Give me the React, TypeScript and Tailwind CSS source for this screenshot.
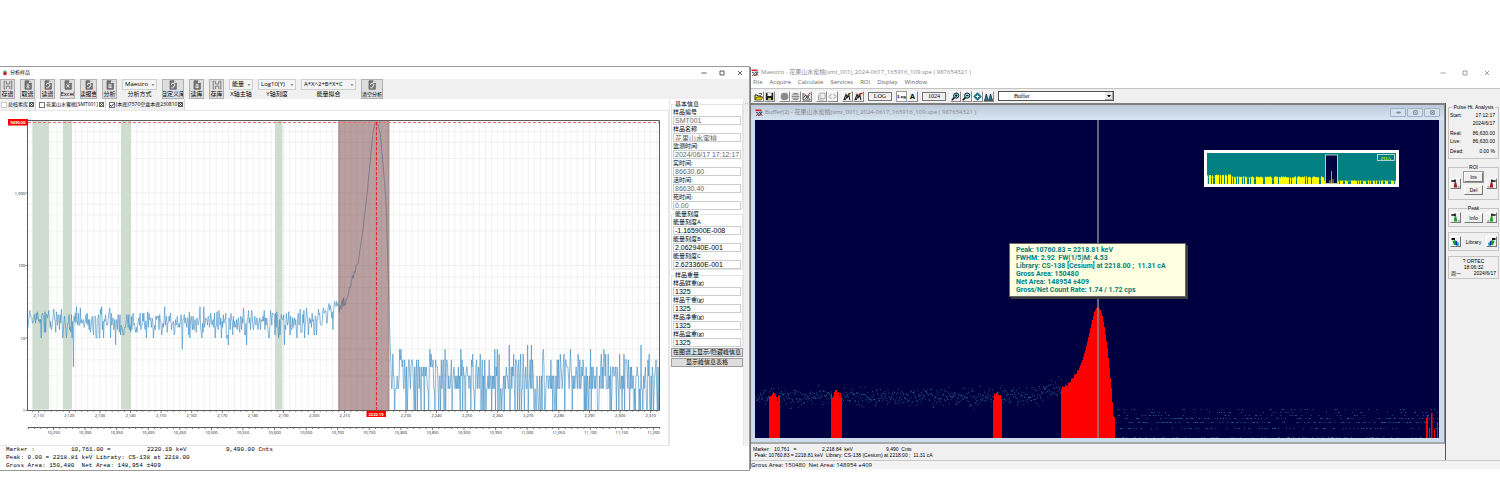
import { ReactNode } from "react";

type Point = [number, number];

const makeRandom = (seed: number) => {
    let s = seed;
    return () => {
        s = (s * 1664525 + 1013904223) % 4294967296;
        return s / 4294967296;
    };
};

const poisson = (mean: number, rnd: () => number) => {
    const limit = Math.exp(-mean);
    let k = 0;
    let p = rnd();
    while (p > limit) {
        k++;
        p *= rnd();
    }
    return k;
};

const interpolate = (points: Point[], x: number) => {
    for (let i = 1; i < points.length; i++) {
        const [x0, y0] = points[i - 1];
        const [x1, y1] = points[i];
        if (x <= x1) return y0 + ((x - x0) / (x1 - x0)) * (y1 - y0);
    }
    return points[points.length - 1][1];
};

// log scale of the left chart: one decade is 72.5 units high
const logY = (v: number) => 410.5 - Math.log10(Math.max(v, 1)) * 72.5;

const DIPS: Record<number, number> = { 73: 4, 99: 10, 115: 8, 182: 7, 228: 8, 246: 8, 284: 8, 304: 10 };

const PEAK: Point[] = [
    [339, 308],
    [343, 302],
    [346, 303],
    [350, 287],
    [353, 276],
    [358, 262],
    [362, 237],
    [366, 204],
    [370, 164],
    [373, 132],
    [375, 123],
    [377, 122],
    [380, 132],
    [383, 163],
    [386, 202],
    [388, 265],
    [389, 300],
    [390, 340],
    [391, 366],
];

const buildSpectrum = () => {
    const rnd = makeRandom(77);
    const pts: string[] = [];
    let lastDip = 0;
    for (let x = 28; x < 659.5; x += 0.63) {
        let y: number;
        if (x < 338) {
            const mean = x > 322 ? 18 + (x - 322) * 0.8 : 17;
            let v = Math.min(Math.max(poisson(mean, rnd), 10), x > 322 ? 32 : 27);
            const key = Math.floor(x);
            if (DIPS[key] && lastDip !== key) {
                v = DIPS[key];
                lastDip = key;
            }
            y = logY(v);
        } else if (x < 391) {
            const noise = x < 347 ? 10 : x < 359 ? 5 : 0;
            y = interpolate(PEAK, x) + (rnd() - 0.5) * noise;
        } else {
            y = logY(Math.min(poisson(3, rnd), 8));
        }
        pts.push(`${x.toFixed(1)},${y.toFixed(1)}`);
    }
    return pts.join(" ");
};

const SPECTRUM = buildSpectrum();

const kevX = (v: number) => 38.7 + (v - 2110) * 3.06;
const chanX = (v: number) => 53.5 + (v - 10250) * 0.6315;
const range = (from: number, to: number, step: number) => {
    const out: number[] = [];
    for (let v = from; v <= to; v += step) out.push(v);
    return out;
};

const GREEN_BANDS = [
    [32.5, 16.5],
    [63, 9],
    [121, 10],
    [275, 7.5],
];

const SpectrumChart = () => (
    <svg viewBox="0 111 668 334" className="block w-full" fontFamily="'Open Sans', sans-serif">
        <g stroke="#ededed" strokeWidth="0.7">
            {range(2108, 2312, 2).map((v) => (
                <line key={v} x1={kevX(v)} x2={kevX(v)} y1="121" y2="410" />
            ))}
            {[1, 10, 100, 1000].flatMap((d) =>
                [1, 3, 5, 7].map((m) => (
                    <line key={d * m} x1="28" x2="660" y1={logY(d * m)} y2={logY(d * m)} />
                ))
            )}
        </g>
        {GREEN_BANDS.map(([x, w]) => (
            <rect key={x} x={x} y="121" width={w} height="288.5" fill="#cfdcd0" />
        ))}
        <polyline points={SPECTRUM} fill="none" stroke="#3a8cc3" strokeWidth="0.6" />
        <rect x="338.5" y="121" width="50.5" height="289.5" fill="#743f40" fillOpacity="0.5" />
        <path d="M339 121V410M389 121V410" stroke="#9c7c7e" strokeWidth="0.8" />
        <path d="M28 122.5H660" stroke="#f26d6d" strokeWidth="1" strokeDasharray="3 2" />
        <path d="M376.5 122V410" stroke="#f0282c" strokeWidth="1" strokeDasharray="3.5 1.5" />
        <path d="M27.5 120.5H659.5V410.5H27.5Z" fill="none" stroke="#5c5c5c" strokeWidth="1" />
        <path d="M28 427.5H660" stroke="#5c5c5c" strokeWidth="1" />
        <g stroke="#5c5c5c" strokeWidth="0.8">
            {[1, 10, 100, 1000].flatMap((d) =>
                [1, 3, 5, 7].map((m) => (
                    <line key={d * m} x1={m === 1 ? 25.5 : 27} x2="28" y1={logY(d * m)} y2={logY(d * m)} />
                ))
            )}
            {range(2108, 2312, 2).map((v) => (
                <line key={v} x1={kevX(v)} x2={kevX(v)} y1="410.5" y2={v % 10 === 0 ? 413 : 411.8} />
            ))}
            {range(10210, 11210, 10).map((v) => (
                <line key={v} x1={chanX(v)} x2={chanX(v)} y1="427.5" y2={v % 50 === 0 ? 430 : 429} />
            ))}
        </g>
        <g fontSize="4" fill="#111" textAnchor="middle">
            {range(2110, 2310, 10)
                .filter((v) => v !== 2220)
                .map((v) => (
                    <text key={v} x={kevX(v)} y="417">
                        {v.toLocaleString("en-US")}
                    </text>
                ))}
            {range(10250, 11200, 50).map((v) => (
                <text key={v} x={chanX(v)} y="434">
                    {v.toLocaleString("en-US")}
                </text>
            ))}
        </g>
        <g fontSize="4" fill="#111" textAnchor="end">
            {[1, 10, 100, 1000].map((v) => (
                <text key={v} x="25" y={logY(v) + 1.5}>
                    {v.toLocaleString("en-US")}
                </text>
            ))}
        </g>
        <rect x="8" y="119" width="20" height="6.5" fill="#ff0000" />
        <text x="18" y="124" fontSize="4" fontWeight="700" fill="#fff" textAnchor="middle">
            9490.00
        </text>
        <rect x="366.5" y="410.8" width="19.5" height="6.2" fill="#ff0000" />
        <text x="376" y="415.6" fontSize="4" fontWeight="700" fill="#fff" textAnchor="middle">
            2220.19
        </text>
    </svg>
);

const SaveIcon = () => (
    <svg viewBox="0 0 10 10" className="size-[10px]" fill="none" stroke="#666" strokeWidth="0.8">
        <path d="M1.2 1v8M8.8 1v8M3.4 1v3h3.4V1M3.4 9V6.2h3.4V9M1.2 1h1M7.8 1h1M1.2 9h1M7.8 9h1" />
    </svg>
);

const DocIcon = ({ mark }: { mark?: string }) => (
    <svg viewBox="0 0 10 10" className="size-[10px]">
        <path d="M2 .8h4L8.3 3v6.2H2z" fill="#777" stroke="#555" strokeWidth="0.7" />
        <path d="M6 .8V3h2.3z" fill="#eee" />
        {mark && <path d={mark} fill="none" stroke="#f2f2f2" strokeWidth="0.9" />}
    </svg>
);

const DOWN = "M3.5 7.8h3M5 3.6v3M3.6 5.3 5 6.7l1.4-1.4";
const CYCLE = "M3.3 5a1.8 1.8 0 1 1 1.8 1.8M3.2 7.8h2.5";
const CROSS = "M3.4 4l3 3.6M6.4 4l-3 3.6";
const LINES = "M3.5 4.8h3.2M3.5 6.2h3.2M3.5 7.6h3.2";

const ToolButton = ({ label, size = "w-[15px] text-[6px]", children }: { label: string; size?: string; children: ReactNode }) => (
    <button
        className={`${size} flex h-[20px] shrink-0 flex-col items-center overflow-hidden border border-[#b0b0b0] bg-[#dedede] leading-[8px] whitespace-nowrap`}
    >
        {children}
        <span>{label}</span>
    </button>
);

const Combo = ({ id, value, label, width }: { id: string; value: string; label: string; width: string }) => (
    <div className={`${width} flex shrink-0 flex-col items-center`}>
        <div className="relative w-full">
            <select
                id={id}
                className="block h-[11px] w-full appearance-none border border-[#cfcfcf] bg-[#f4f4f4] pl-0.5 text-[6px] leading-[9px]"
            >
                <option>{value}</option>
            </select>
            <svg viewBox="0 0 4 4" className="pointer-events-none absolute top-1 right-0.5 size-1">
                <path d="M0.5 1.2h3L2 3z" fill="#777" />
            </svg>
        </div>
        <label htmlFor={id} className="text-[6px] leading-[8px] whitespace-nowrap">
            {label}
        </label>
    </div>
);

const Tab = ({ label, checked, active, disabled }: { label: string; checked?: boolean; active?: boolean; disabled?: boolean }) => (
    <div className={`flex items-center gap-px border-r border-[#d5d5d5] px-px ${active ? "bg-white" : "bg-[#f0f0f0]"}`}>
        <label className="flex items-center gap-px whitespace-nowrap">
            <input
                type="checkbox"
                defaultChecked={checked}
                disabled={disabled}
                className="peer size-[6px] appearance-none border border-[#777] bg-white disabled:border-[#ccc]"
            />
            <svg viewBox="0 0 6 6" className="-ml-[7px] hidden size-[6px] peer-checked:block">
                <path d="M1.2 3l1.3 1.4L5 1.5" fill="none" stroke="#111" strokeWidth="0.9" />
            </svg>
            {label}
        </label>
        <button aria-label="关闭">
            <svg viewBox="0 0 6 6" className="block size-[5px]" fill="none" stroke="#222" strokeWidth="0.9">
                <path d="M.5.5h5v5h-5zM1 1l4 4M5 1 1 5" />
            </svg>
        </button>
    </div>
);

type FieldData = { label: string; value: string };

const INFO: FieldData[] = [
    { label: "样品编号", value: "SMT001" },
    { label: "样品名称", value: "花果山水蜜桃" },
    { label: "监测时间:", value: "2024/06/17 17:12:17" },
    { label: "实时间:", value: "86630.60" },
    { label: "活时间:", value: "86630.40" },
    { label: "死时间:", value: "0.00" },
];
const ENERGY: FieldData[] = [
    { label: "能量刻度A", value: "-1.165900E-008" },
    { label: "能量刻度B", value: "2.062940E-001" },
    { label: "能量刻度C", value: "2.623360E-001" },
];
const WEIGHT: FieldData[] = [
    { label: "样品鲜重(g)", value: "1325" },
    { label: "样品干重(g)", value: "1325" },
    { label: "样品净重(g)", value: "1325" },
    { label: "样品盒重(g)", value: "1325" },
];

const FieldGroup = ({ title, fields, height, muted }: { title: string; fields: FieldData[]; height: string; muted?: boolean }) => (
    <fieldset className="border border-[#e2e2e2]">
        <legend className="ml-0.5 px-px leading-[8px]">{title}</legend>
        <div className={`${height} flex flex-col justify-between px-px`}>
            {fields.map((f) => (
                <label key={f.label} className="block leading-[8px]">
                    {f.label}
                    <input
                        defaultValue={f.value}
                        className={`block h-[9px] w-full border border-[#cdcdcd] bg-white pl-px font-['Liberation_Sans','Noto_Sans_CJK_SC',sans-serif] text-[7px] leading-[7px] ${
                            muted ? "text-[#666]" : "text-black"
                        }`}
                    />
                </label>
            ))}
        </div>
    </fieldset>
);

const WindowControls = ({ color, gap }: { color: string; gap: string }) => (
    <div className={`${color} ${gap} ml-auto flex`}>
        {["M.5 3h5", "M1 1h4v4H1z", "M1 1l4 4M5 1 1 5"].map((d, i) => (
            <button key={d} aria-label={["minimize", "maximize", "close"][i]}>
                <svg viewBox="0 0 6 6" className="block size-[6px]" fill="none" stroke="currentColor" strokeWidth="0.8">
                    <path d={d} />
                </svg>
            </button>
        ))}
    </div>
);

const AnalysisWindow = () => (
    <section className="flex flex-col border-t border-r border-b border-[#9a9a9a] bg-white font-['Open_Sans','Noto_Sans_CJK_SC',sans-serif] text-[6px] text-black">
        <header className="flex h-[12px] items-center gap-0.5 pr-1.5 pl-0.5">
            <svg viewBox="0 0 6 6" className="size-[6px]">
                <circle cx="3" cy="3.4" r="2" fill="#e04040" />
                <path d="M3 2.5V.3M1.3 1.2 3 2l1.7-.8" stroke="#26a65b" strokeWidth="0.9" fill="none" />
                <circle cx="3" cy="3.4" r="0.8" fill="#333" />
            </svg>
            <h1 className="text-[5px]">分析样品</h1>
            <WindowControls color="text-[#333]" gap="gap-3" />
        </header>
        <div className="flex h-[20px] gap-[5px] bg-[#f0f0f0]">
            <ToolButton label="存谱"><SaveIcon /></ToolButton>
            <ToolButton label="取谱"><DocIcon mark={DOWN} /></ToolButton>
            <ToolButton label="读谱"><DocIcon mark={CYCLE} /></ToolButton>
            <ToolButton label="Excel"><DocIcon mark={CROSS} /></ToolButton>
            <ToolButton label="读报告" size="w-[17px] text-[6px]"><DocIcon mark={CYCLE} /></ToolButton>
            <ToolButton label="分析"><DocIcon mark={LINES} /></ToolButton>
            <Combo id="method" value="Maestro" label="分析方式" width="w-[35px]" />
            <ToolButton label="自定义库" size="w-[22px] text-[6px]"><DocIcon mark={CYCLE} /></ToolButton>
            <ToolButton label="读库"><DocIcon mark={LINES} /></ToolButton>
            <ToolButton label="存库"><SaveIcon /></ToolButton>
            <Combo id="xaxis" value="能量" label="X轴主轴" width="w-[24px]" />
            <Combo id="yaxis" value="Log10(Y)" label="Y轴刻度" width="w-[38px]" />
            <Combo id="fit" value="A*X^2+B*X+C" label="能量拟合" width="w-[55px]" />
            <ToolButton label="清空分析" size="w-[22px] text-[5px]"><DocIcon mark={CYCLE} /></ToolButton>
        </div>
        <div className="flex flex-1">
            <div className="flex min-w-0 flex-1 flex-col">
                <div className="flex h-[11px] gap-0.5 text-[5px]">
                    <Tab label="总核素库" disabled />
                    <Tab label="花果山水蜜桃[SMT001]" active />
                    <Tab label="(本底)7570空盒本底230810" checked />
                </div>
                <div className="border-t border-r border-b border-[#e6e6e6]">
                    <SpectrumChart />
                </div>
            </div>
            <aside className="flex w-[80px] shrink-0">
                <div className="flex min-w-0 flex-1 flex-col gap-px border-x border-[#e6e6e6] pt-px pl-px">
                    <FieldGroup title="基本信息" fields={INFO} height="h-[100px]" muted />
                    <FieldGroup title="能量刻度" fields={ENERGY} height="h-[51px]" />
                    <FieldGroup title="样品重量" fields={WEIGHT} height="h-[67px]" />
                    <button className="h-[9px] overflow-hidden border border-[#9d9d9d] bg-[#dedede] leading-[7px] whitespace-nowrap">
                        在图谱上显示/隐藏峰信息
                    </button>
                    <button className="h-[9px] overflow-hidden border border-[#9d9d9d] bg-[#dedede] leading-[7px] whitespace-nowrap">
                        显示峰信息表格
                    </button>
                </div>
                <div className="w-[5px] bg-[#f0f0f0] pt-0.5">
                    <svg viewBox="0 0 5 5" className="size-[5px]" fill="none" stroke="#aaa" strokeWidth="0.7">
                        <path d="M1 3.3 2.5 1.8 4 3.3" />
                    </svg>
                </div>
            </aside>
        </div>
        <footer className="px-1.5 font-['Liberation_Mono',monospace] leading-[8px] whitespace-pre">
            <div className="flex">
                <span className="w-[65px]">Marker :</span>
                <span className="w-[76px]">10,761.00 =</span>
                <span className="w-[79px]">2220.19 keV</span>
                <span>9,490.00 Cnts</span>
            </div>
            <p>Peak: 0.00 = 2218.81 keV Libraty: CS-138 at 2218.00</p>
            <p>Gross Area: 150,480  Net Area: 148,954 ±409</p>
        </footer>
    </section>
);

const ROI_TOPS: Point[] = [
    [1061, 388],
    [1064, 386],
    [1067, 385],
    [1073, 377],
    [1078, 370],
    [1082, 360],
    [1085, 350],
    [1088, 337],
    [1091, 324],
    [1094, 312],
    [1096, 308],
    [1098, 307],
    [1100, 310],
    [1102, 316],
    [1104, 327],
    [1107, 348],
    [1109, 368],
    [1111, 388],
    [1113, 416],
    [1115, 418],
];

const SMALL_ROIS = [
    [769, 397, 396, 396, 394, 392, 393, 396, 397, 401, 395, 396],
    [831, 394, 398, 396, 392, 390, 390, 393, 392, 396, 393, 398],
    [993, 400, 394, 396, 393, 392, 395, 396, 395, 399],
];

const buildDots = () => {
    const rnd = makeRandom(2024);
    let d = "";
    for (let x = 756; x < 1061; x += 0.5) {
        const rise = x > 1025 ? (x - 1025) * 0.25 : 0;
        const y = 397 - rise + (rnd() + rnd() + rnd() - 1.5) * 9;
        d += `M${x.toFixed(1)} ${y.toFixed(1)}h.9`;
    }
    const rows = [409.5, 412.5, 415.5, 418.5, 418.5, 422.5, 422.5, 422.5, 428.5, 428.5, 437.5, 437.5];
    for (let x = 1116; x < 1439; x += 0.7) {
        d += `M${x.toFixed(1)} ${rows[Math.floor(rnd() * rows.length)]}h.9`;
    }
    return d;
};

const DOTS = buildDots();

const peakSteps = () => {
    let d = "M1061 438";
    for (let x = 1061; x < 1115; x++) {
        const wobble = x < 1078 ? (x % 3) - 1 : 0;
        d += `V${(interpolate(ROI_TOPS, x) + wobble).toFixed(1)}h1`;
    }
    return d + "V438z";
};

const MaestroPlot = () => (
    <svg viewBox="755 120 684 318" className="block w-full bg-[#000040]">
        <path d={DOTS} stroke="#2f93ab" strokeWidth="0.8" strokeOpacity="0.85" />
        <g fill="#ff0000">
            {SMALL_ROIS.map(([start, ...tops]) => (
                <path key={start} d={`M${start} 438${tops.map((t) => `V${t}h1`).join("")}V438z`} />
            ))}
            <path d={peakSteps()} />
            <path d="M1426 438V418h1V415h1V438zM1429 438v-10h1v10zM1431 438V413h1.5v25zM1434 438v-9h1v9zM1437 438v-16h1v16z" />
        </g>
        <path d="M1098 120V438" stroke="#858585" strokeWidth="1.5" />
    </svg>
);

const buildPreviewBars = () => {
    const rnd = makeRandom(9);
    let d = "";
    for (let x = 0; x < 189; x++) {
        if (x > 117 && x < 131) continue;
        const chance = x < 117 ? 0.74 : 0.6;
        if (rnd() > chance) continue;
        const h = x < 25 ? 8.5 : x < 117 ? 6.5 : 2.5;
        d += `M${x + 0.5} 31v-${(h + rnd() * 1.2).toFixed(1)}`;
    }
    return d;
};

const PREVIEW_BARS = buildPreviewBars();

const Preview = () => (
    <div className="absolute top-[30px] right-[40px] w-[195px] border-3 border-white bg-[#008080]">
        <svg viewBox="0 0 189 31" className="block w-full">
            <path d="M0 24.5 25 24l35 2h57l2 2h70" stroke="#d8d860" strokeWidth="0.5" fill="none" />
            <path d={PREVIEW_BARS} stroke="#ffff00" strokeWidth="1" />
            <rect x="118.5" y="2" width="12" height="28.5" fill="#000040" stroke="#e8e8e8" strokeWidth="0.8" />
            <path d="M124.5 31V18M123 31v-4M126 31v-5" stroke="#d8d800" strokeWidth="0.8" />
            <rect x="170.5" y="1.5" width="17" height="6" fill="none" stroke="#dfe8e8" strokeWidth="0.8" />
            <text x="179" y="6.5" fontSize="5" fill="#ffff00" textAnchor="middle" fontFamily="'Liberation Serif', serif">
                PHA
            </text>
        </svg>
    </div>
);

const PEAK_INFO = [
    "Peak: 10760.83 = 2218.81 keV",
    "FWHM: 2.92  FW(1/5)M: 4.53",
    "Library: CS-138 [Cesium] at 2218.00 ;  11.31 cA",
    "Gross Area: 150480",
    "Net Area: 148954 ±409",
    "Gross/Net Count Rate: 1.74 / 1.72 cps",
];

const FileLogo = () => (
    <svg viewBox="0 0 8 8" className="size-[8px] shrink-0">
        <path d="M.5.5h6v1.6h-6z" fill="#d22" />
        <path d="M1 3.2l2.5 1L1.2 7M4 2.8l3.2 3.8M7 3 4 7" stroke="#333" strokeWidth="0.9" fill="none" />
        <path d="M3 5.5h2.5V7H3z" fill="#c33" />
        <path d="M5.2 2.5h2v1.6h-2z" fill="#3a62b8" />
    </svg>
);

const ToolIcon = ({ name, children }: { name: string; children: ReactNode }) => (
    <button
        aria-label={name}
        className="size-[11px] shrink-0 border border-t-white border-r-[#8a8a8a] border-b-[#8a8a8a] border-l-white bg-[#f0f0f0]"
    >
        <svg viewBox="0 0 9 9" className="block size-[9px]" fill="none" strokeWidth="1">
            {children}
        </svg>
    </button>
);

const Lens = ({ mark }: { mark: string }) => (
    <>
        <path d="M3.6 5.4.8 8.2" stroke="#111" strokeWidth="1.6" />
        <circle cx="5.2" cy="3.6" r="2.6" fill="#7fe0e0" stroke="#123" />
        <path d={mark} stroke="#111" />
    </>
);

const sideIcon = "size-[11px] border border-t-white border-r-[#777] border-b-[#777] border-l-white bg-[#f0f0f0]";

const Bust = ({ color, flip }: { color: string; flip?: boolean }) => (
    <button aria-label={flip ? "next" : "previous"} className={sideIcon}>
        <svg viewBox="0 0 9 9" className={flip ? "block size-[9px] -scale-x-100" : "block size-[9px]"}>
            <path d="M.3 1.2h3V.5h1.5v2.8H3.3V2.8h-3z" fill="#111" />
            <path d="M3.6 3.2h1.6L6.4 8.5H2.8z" fill={color} />
            <path d="M7 7.3h1.6v1.2H7z" fill="#888" />
        </svg>
    </button>
);

const Books = ({ flip }: { flip?: boolean }) => (
    <button aria-label={flip ? "next entry" : "previous entry"} className={sideIcon}>
        <svg viewBox="0 0 9 9" className={flip ? "block size-[9px] -scale-x-100" : "block size-[9px]"}>
            <path d="M.5 1h3.5v2H.5z" fill="#111" />
            <path d="M1.5 4 4 3l1.5 5H3z" fill="#18a020" />
            <path d="M4 3.5 6 4l1 4.5H5z" fill="#2030c0" />
            <path d="M6.3 5 8 6v2.5H7z" fill="#20b0c0" />
        </svg>
    </button>
);

const Group = ({ title, children }: { title: string; children: ReactNode }) => (
    <fieldset className="border border-[#c4c4c4] pb-[3px]">
        <legend className="mx-auto px-px text-[5px] leading-[7px]">{title}</legend>
        {children}
    </fieldset>
);

const pushButton =
    "h-[10px] w-[19px] border border-t-white border-r-[#777] border-b-[#777] border-l-white bg-[#f0f0f0] text-[5px] leading-[8px]";

const StatRow = ({ name, value }: { name: string; value: string }) => (
    <div className="flex justify-between px-px">
        <dt>{name}</dt>
        <dd>{value}</dd>
    </div>
);

const MaestroSide = () => (
    <aside className="flex w-[55px] shrink-0 flex-col gap-[5px] border-l border-[#555] bg-[#f0f0f0] pt-px pr-px pl-0.5 font-['Liberation_Sans',sans-serif] text-[5px] leading-[8px] whitespace-nowrap text-black">
        <Group title="Pulse Ht. Analysis">
            <dl className="pr-0.5">
                <StatRow name="Start:" value="17:12:17" />
                <StatRow name="" value="2024/6/17" />
                <div className="pt-0.5">
                    <StatRow name="Real:" value="86,630.00" />
                    <StatRow name="Live:" value="86,630.00" />
                </div>
                <div className="pt-0.5">
                    <StatRow name="Dead:" value="0.00  %" />
                </div>
            </dl>
        </Group>
        <Group title="ROI">
            <div className="flex items-center justify-between px-px">
                <Bust color="#a01818" />
                <div className="flex flex-col gap-[3px] py-px">
                    <button className={`${pushButton} outline outline-[#999]`}>Ins</button>
                    <button className={pushButton}>Del</button>
                </div>
                <Bust color="#a01818" flip />
            </div>
        </Group>
        <Group title="Peak">
            <div className="flex items-center justify-between px-px">
                <Bust color="#18a020" />
                <button className={pushButton}>Info</button>
                <Bust color="#18a020" flip />
            </div>
        </Group>
        <div className="flex items-center justify-between border border-[#c4c4c4] px-px py-[3px]">
            <Books />
            Library
            <Books flip />
        </div>
        <div className="border border-[#c4c4c4] pt-px pb-0.5 text-center leading-[6px]">
            <p>? ORTEC</p>
            <p>18:06:32</p>
            <p className="flex justify-between px-0.5">
                <span className="font-['Noto_Sans_CJK_SC',sans-serif]">周一</span>
                <span>2024/6/17</span>
            </p>
        </div>
    </aside>
);

const FILE_NAME = "花果山水蜜桃(smt_001)_2024-0617_165916_109.spe ( 987654321 )";

const MaestroWindow = () => (
    <section className="mt-px flex flex-col border-l border-[#777] bg-white font-['Open_Sans','Noto_Sans_CJK_SC',sans-serif] text-[6px] text-[#888]">
        <header className="flex h-[11px] items-center gap-0.5 pr-[10px]">
            <FileLogo />
            <h1>Maestro - {FILE_NAME}</h1>
            <WindowControls color="text-[#888]" gap="gap-4" />
        </header>
        <nav className="flex h-[10px] gap-[7px] px-0.5 leading-[9px] text-[#666]">
            {["File", "Acquire", "Calculate", "Services", "ROI", "Display", "Window"].map((m) => (
                <a key={m} href="#">
                    {m}
                </a>
            ))}
        </nav>
        <div className="flex h-[15px] items-center gap-1 border-t border-[#c4c4c4] bg-[#f0f0f0] px-0.5">
            <div className="flex">
                <ToolIcon name="open">
                    <path d="M1 8V3h2l1 1h3v1" fill="#ffee40" stroke="#222" />
                    <path d="M1 8l1.8-3H9L7 8z" fill="#e8d000" stroke="#222" strokeWidth="0.6" />
                    <path d="M5 1.5h2.5v1.4" stroke="#222" strokeWidth="0.7" />
                </ToolIcon>
                <ToolIcon name="save">
                    <path d="M.8.8h7.4v7.4H.8z" fill="#222" />
                    <path d="M2.5 1h4v3h-4z" fill="#eee" />
                    <path d="M3 6h3v2H3z" fill="#b8b860" />
                </ToolIcon>
            </div>
            <div className="flex">
                <ToolIcon name="start">
                    <circle cx="4.5" cy="4.5" r="3.8" fill="#8a8a8a" />
                </ToolIcon>
                <ToolIcon name="stop">
                    <circle cx="4.5" cy="4.5" r="3.8" fill="#8a8a8a" />
                    <path d="M0 3.2h9M1 5.8h7" stroke="#e8e8e8" />
                </ToolIcon>
                <ToolIcon name="clear">
                    <path d="M1 1v7h7.5M1.5 6l2-3 2 3.5L7.5 3M2 1.5l6 6M8 1 3 7" stroke="#444" strokeWidth="0.9" />
                    <circle cx="7.8" cy="1.2" r="0.8" fill="#d33" />
                </ToolIcon>
            </div>
            <div className="flex">
                <ToolIcon name="copy">
                    <path d="M3 1h5v5.5H3zM1.5 3v5h5" stroke="#b0b0b0" />
                </ToolIcon>
                <ToolIcon name="compare">
                    <path d="M3.5 2 1 4.5 3.5 7M5.5 2 8 4.5 5.5 7" stroke="#999" />
                </ToolIcon>
            </div>
            <div className="flex">
                <ToolIcon name="mark ROI">
                    <path d="M.8 8.2 3 2.5l1.3 3L6 3.5l.8 4.7M2 8l4.5-7" stroke="#222" strokeWidth="1.1" />
                    <path d="M5.5 3.5 8.5.5" stroke="#a08020" />
                </ToolIcon>
                <ToolIcon name="clear ROI">
                    <path d="M.8 8.2 3 2.5l1.3 3L6 3.5l.8 4.7M2 8l4.5-7" stroke="#222" strokeWidth="1.1" />
                    <path d="M5 3l3.5-2" stroke="#d02020" strokeWidth="1.4" />
                </ToolIcon>
            </div>
            <output className="h-[9px] w-[24px] border border-[#777] text-center font-['Liberation_Serif',serif] leading-[7px] text-black">
                LOG
            </output>
            <div className="flex text-black">
                <button className="h-[11px] w-[11px] border border-[#999] bg-white text-center font-['Liberation_Serif',serif] text-[5px] leading-[9px] font-bold">
                    Log
                </button>
                <button className="h-[11px] w-[11px] border border-t-white border-r-[#888] border-b-[#888] border-l-white text-[7px] leading-[9px] font-bold">
                    A
                </button>
            </div>
            <output className="h-[9px] w-[24px] border border-[#777] text-center font-['Liberation_Serif',serif] leading-[7px] text-black">
                1024
            </output>
            <div className="flex">
                <ToolIcon name="zoom in">
                    <Lens mark="M4 3.6h2.4M5.2 2.4v2.4" />
                </ToolIcon>
                <ToolIcon name="zoom out">
                    <Lens mark="M4 3.6h2.4" />
                </ToolIcon>
                <ToolIcon name="center">
                    <path d="M4.5.3 8.7 4.5 4.5 8.7.3 4.5z" fill="#0e6f80" />
                    <path d="M4.5 2.8v3.4M2.8 4.5h3.4" stroke="#fff" />
                </ToolIcon>
                <ToolIcon name="baseline">
                    <path d="M.8 8l1.5-6L4 8M5 8l1.5-6L8.3 8" fill="#2a8a9a" stroke="#134" strokeWidth="0.9" />
                    <path d="M0 8.3h9" stroke="#134" />
                </ToolIcon>
            </div>
            <div className="relative w-[116px]">
                <select
                    aria-label="detector"
                    className="block h-[10px] w-full appearance-none border border-[#555] bg-white pl-[15px] font-['Liberation_Serif',serif] leading-[8px] text-black"
                >
                    <option>Buffer</option>
                </select>
                <svg viewBox="0 0 8 8" className="pointer-events-none absolute top-px right-px size-2">
                    <path d="M0 0h8v8H0z" fill="#e8e8e8" />
                    <path d="M7.7 0v7.7H0" fill="none" stroke="#777" strokeWidth="0.7" />
                    <path d="M2 3h4L4 5.2z" fill="#000" />
                </svg>
            </div>
        </div>
        <div className="flex">
            <div className="min-w-0 flex-1">
                <div className="border-t-2 border-r border-b-2 border-t-[#808080] border-r-[#8a8a8a] border-b-[#a8a8a8] bg-[#cddced]">
                    <header className="flex h-[15px] items-center gap-0.5 bg-linear-to-b from-[#bccadb] to-[#d8e5f2] px-1">
                        <FileLogo />
                        <h2>Buffer(2) - {FILE_NAME}</h2>
                        <div className="ml-auto flex gap-px">
                            {["M2 3.5h4v1H2z", "M2 2h4v4H2zM3.5 4h1", "M2 2h4v4H2zM3 3l2 2M5 3 3 5"].map((d, i) => (
                                <button
                                    key={d}
                                    aria-label={["minimize", "maximize", "close"][i]}
                                    className="flex h-[9px] w-[16px] items-center justify-center rounded-[1px] border border-[#9fb2c8] bg-[#d3e0ee]"
                                >
                                    <svg viewBox="0 0 8 8" className="size-[7px]" fill="none" stroke="#666" strokeWidth="0.8">
                                        <path d={d} />
                                    </svg>
                                </button>
                            ))}
                        </div>
                    </header>
                    <div className="relative mr-[5px] mb-[4px] ml-[4px]">
                        <MaestroPlot />
                        <Preview />
                        <div
                            role="tooltip"
                            className="absolute top-[123px] left-[254px] w-[177px] border border-[#666] bg-[#ffffe1] px-1.5 py-0.5 font-['Roboto',sans-serif] text-[7px] leading-[8px] font-bold whitespace-pre text-[#008080] shadow-[2px_2px_0_#3c3c3c]"
                        >
                            {PEAK_INFO.map((line) => (
                                <p key={line}>{line}</p>
                            ))}
                        </div>
                    </div>
                </div>
                <div className="h-[16px] bg-[#f0f0f0] px-0.5 pt-0.5 font-['Liberation_Sans',sans-serif] text-[5px] leading-[6px] whitespace-pre text-black">
                    <div className="flex">
                        <span className="w-[69px]">Marker:   10,761   =</span>
                        <span className="w-[64px]">2,218.84  keV</span>
                        <span>9,490  Cnts</span>
                    </div>
                    <p>{" Peak: 10760.83 = 2218.81 keV  Library: CS-138 (Cesium) at 2218.00 ;  11.31 cA"}</p>
                </div>
            </div>
            <MaestroSide />
        </div>
        <footer className="h-[9px] border-t border-[#c8c8c8] bg-[#f3f3f3] leading-[8px] whitespace-pre text-black">
            Gross Area: 150480  Net Area: 148954 ±409
        </footer>
    </section>
);

export default function App() {
    return (
        <main className="grid min-h-screen grid-cols-2 items-start bg-white pt-[66px]">
            <AnalysisWindow />
            <MaestroWindow />
        </main>
    );
}
